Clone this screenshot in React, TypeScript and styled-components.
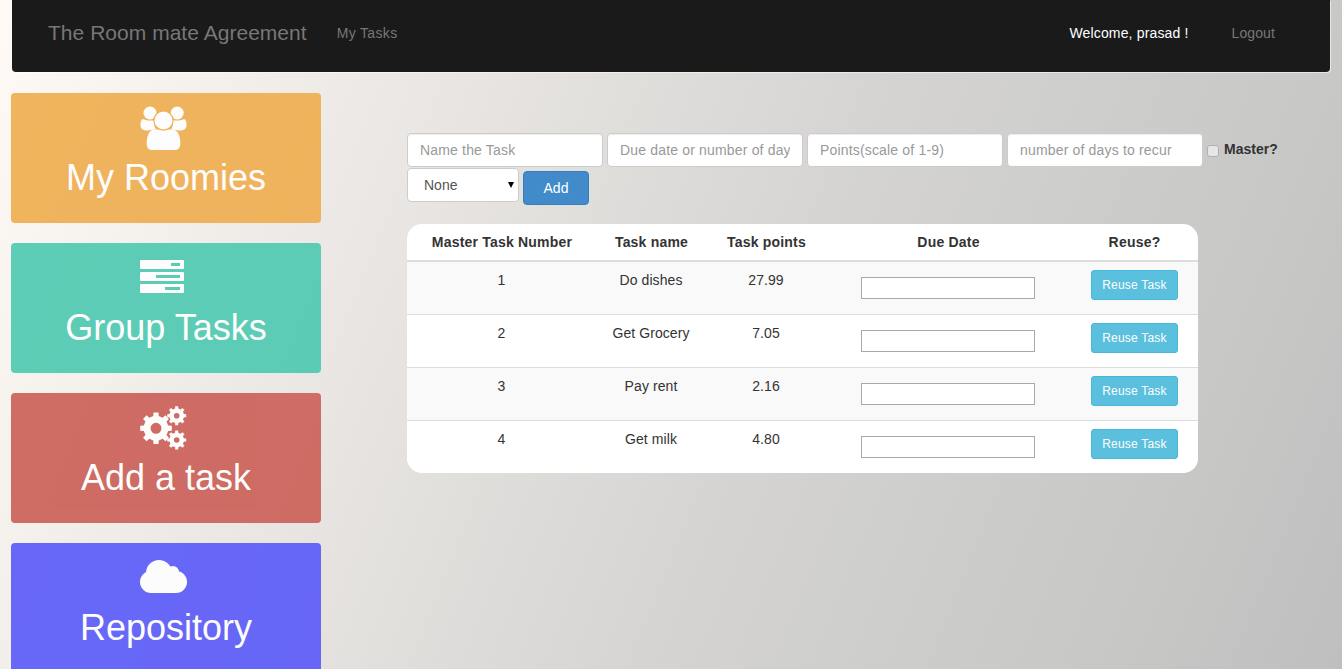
import React from 'react';
import styled, { createGlobalStyle } from 'styled-components';

const GlobalStyle = createGlobalStyle`
  html, body {
    margin: 0;
    height: 669px;
    overflow: hidden;
  }
  body {
    font-family: "Liberation Sans", Arial, sans-serif;
    font-size: 14px;
    line-height: 20px;
    color: #333;
    background: linear-gradient(112deg, #fffaf5 0%, #e8e5e2 31%, #d5d4d2 57%, #cccccb 74%, #c8c8c7 84%, #bfbfbf 100%);
  }
  * {
    box-sizing: border-box;
  }
`;

const Navbar = styled.nav`
  margin: 0 12px;
  height: 72px;
  background: #1a1a1a;
  border-radius: 0 0 4px 4px;
  box-shadow: 1px 1px 0 rgba(255, 255, 255, 0.55);
  display: flex;
  align-items: center;
  padding: 0 55px 6px 36px;
`;

const Brand = styled.a`
  font-size: 21px;
  letter-spacing: 0.03px;
  color: #777;
`;

const NavLink = styled.a`
  font-size: 14px;
  letter-spacing: 0.35px;
  color: #777;
  margin-left: 30px;
`;

const LogoutLink = styled(NavLink)`
  margin-left: 0;
  letter-spacing: 0.1px;
`;

const NavRight = styled.div`
  margin-left: auto;
  display: flex;
  align-items: center;
  gap: 43px;
`;

const Welcome = styled.span`
  letter-spacing: 0.16px;
  color: #fff;
`;

const Layout = styled.div`
  display: flex;
  align-items: flex-start;
  padding: 21px 0 0 11px;
`;

const Sidebar = styled.aside`
  width: 310px;
  flex: none;
  display: flex;
  flex-direction: column;
  gap: 20px;
`;

const Tile = styled.a<{ $bg: string }>`
  height: 130px;
  flex: none;
  border-radius: 4px;
  background: ${({ $bg }) => $bg};
  opacity: 0.9;
  color: #fff;
  display: flex;
  flex-direction: column;
  align-items: center;
  padding-top: 13px;
`;

const TileIcon = styled.svg`
  width: 47px;
  height: 44px;
  margin-right: 5px;
  fill: currentColor;
  display: block;
`;

const TileLabel = styled.span`
  font-size: 36px;
  line-height: 40px;
  margin-top: 8px;
`;

const Main = styled.main`
  margin-left: 86px;
  padding-top: 40px;
  flex: 1;
  min-width: 0;
`;

const TaskForm = styled.form`
  display: flex;
  flex-wrap: wrap;
  align-items: flex-start;
  column-gap: 4px;
  row-gap: 1px;
  margin-bottom: 19px;
`;

const TextField = styled.input`
  width: 196px;
  height: 34px;
  padding: 6px 12px;
  font: 14px/20px "Liberation Sans", Arial, sans-serif;
  letter-spacing: 0.17px;
  color: #555;
  background: #fff;
  border: 1px solid #ccc;
  border-radius: 4px;
  box-shadow: inset 0 1px 1px rgba(0, 0, 0, 0.075);
  &::placeholder {
    color: #999;
    opacity: 1;
  }
`;

const MasterCheck = styled.label`
  display: flex;
  align-items: flex-start;
  font-weight: bold;
  color: #333;
  gap: 5px;
  padding-top: 6px;
  margin-right: 40px;
`;

const CheckBox = styled.span`
  width: 12px;
  height: 12px;
  margin-top: 6px;
  border: 1px solid #b0b0b0;
  border-radius: 3px;
  background: #e6e6e6;
`;

const SelectWrap = styled.div`
  position: relative;
  width: 112px;
  height: 34px;
  &::after {
    content: '';
    position: absolute;
    top: 14px;
    right: 5px;
    border-left: 3.5px solid transparent;
    border-right: 3.5px solid transparent;
    border-top: 6px solid #000;
    pointer-events: none;
  }
`;

const Select = styled.select`
  width: 100%;
  height: 100%;
  appearance: none;
  padding: 0 16px;
  font: 14px/20px "Liberation Sans", Arial, sans-serif;
  color: #555;
  background: #fff;
  border: 1px solid #ccc;
  border-radius: 4px;
`;

const AddButton = styled.button`
  width: 66px;
  height: 34px;
  margin-top: 3px;
  font: 14px/20px "Liberation Sans", Arial, sans-serif;
  color: #fff;
  background: #428bca;
  border: 1px solid #357ebd;
  border-radius: 4px;
`;

const TableCard = styled.div`
  width: 791px;
  background: #fff;
  border-radius: 15px;
  overflow: hidden;
`;

const Table = styled.table`
  width: 100%;
  table-layout: fixed;
  border-collapse: separate;
  border-spacing: 0;
`;

const HeadCell = styled.th<{ $width: number }>`
  width: ${({ $width }) => $width}px;
  height: 38px;
  padding: 8px 8px 8px 9px;
  text-align: center;
  vertical-align: bottom;
  font-weight: bold;
  letter-spacing: 0.2px;
  border-bottom: 2px solid #ddd;
`;

const Row = styled.tr<{ $striped: boolean }>`
  background: ${({ $striped }) => ($striped ? '#f9f9f9' : '#fff')};
`;

const Cell = styled.td`
  height: 52px;
  padding: 8px;
  text-align: center;
  vertical-align: top;
  letter-spacing: 0.08px;
  tr + tr & {
    height: 53px;
    border-top: 1px solid #ddd;
  }
`;

const DateCell = styled(Cell)`
  padding-top: 15px;
`;

const DateInput = styled.input`
  display: block;
  width: 174px;
  height: 22px;
  margin: 0 auto;
  background: #fff;
  border: 1px solid #a9a9a9;
`;

const ReuseButton = styled.button`
  display: block;
  width: 87px;
  height: 30px;
  margin: 0 auto;
  padding: 0 0 0 1px;
  font: 12px/18px "Liberation Sans", Arial, sans-serif;
  letter-spacing: 0.2px;
  color: #fff;
  background: #5bc0de;
  border: 1px solid #46b8da;
  border-radius: 3px;
`;

const gearPath = (cx: number, cy: number, outer: number, inner: number, hole: number, teeth: number) => {
  const points: string[] = [];
  const step = (Math.PI * 2) / teeth;
  for (let i = 0; i < teeth; i++) {
    const a = i * step;
    const corners: [number, number][] = [
      [inner, a - step * 0.28],
      [outer, a - step * 0.2],
      [outer, a + step * 0.2],
      [inner, a + step * 0.28],
    ];
    corners.forEach(([r, t]) => {
      points.push(`${(cx + r * Math.cos(t)).toFixed(2)} ${(cy + r * Math.sin(t)).toFixed(2)}`);
    });
  }
  const ring = `M${cx - hole} ${cy}a${hole} ${hole} 0 1 0 ${hole * 2} 0a${hole} ${hole} 0 1 0 ${-hole * 2} 0Z`;
  return `M${points.join('L')}Z${ring}`;
};

const UsersIcon = () => (
  <TileIcon viewBox="0 0 47 44">
    <circle cx="10" cy="7" r="6.5" />
    <circle cx="37.2" cy="7" r="6.5" />
    <path d="M2 13.5C3.5 12.5 5.5 14.6 10 14.6H14C14 18 14 21 16 23.5L7 24.5C3 24.5.5 23 .5 19.5.5 16.5.8 14.5 2 13.5Z" />
    <path d="M45 13.5C43.5 12.5 41.5 14.6 37 14.6H33C33 18 33 21 31 23.5L40 24.5C44 24.5 46.5 23 46.5 19.5 46.5 16.5 46.2 14.5 45 13.5Z" />
    <path d="M13 23.5H34C38.5 25.5 40.3 31 40.3 37.5 40.3 41.5 38.5 44 35 44H12C8.5 44 6.7 41.5 6.7 37.5 6.7 31 8.5 25.5 13 23.5Z" />
    <circle cx="23.5" cy="14.5" r="9.6" stroke="#f0ad4e" strokeWidth="1.2" />
  </TileIcon>
);

const ServerIcon = () => (
  <TileIcon viewBox="0 0 47 44">
    <path
      fillRule="evenodd"
      d="M1 9h42a1 1 0 0 1 1 1v7a1 1 0 0 1-1 1H1a1 1 0 0 1-1-1v-7a1 1 0 0 1 1-1ZM31 12v3h9v-3ZM1 21h42a1 1 0 0 1 1 1v7a1 1 0 0 1-1 1H1a1 1 0 0 1-1-1v-7a1 1 0 0 1 1-1ZM16 24v3h24v-3ZM1 33h42a1 1 0 0 1 1 1v7a1 1 0 0 1-1 1H1a1 1 0 0 1-1-1v-7a1 1 0 0 1 1-1ZM25 36v3h15v-3Z"
      transform="translate(0 -5)"
    />
  </TileIcon>
);

const GearsIcon = () => (
  <TileIcon viewBox="0 0 47 44">
    <path fillRule="evenodd" d={gearPath(16, 22.3, 16, 12.5, 5.5, 8)} />
    <path fillRule="evenodd" d={gearPath(36.7, 9.7, 9.6, 7.4, 2.8, 8)} />
    <path fillRule="evenodd" d={gearPath(36.7, 34, 9.6, 7.4, 2.8, 8)} />
  </TileIcon>
);

const CloudIcon = () => (
  <TileIcon viewBox="0 0 47 44">
    <g transform="translate(0 4)">
      <circle cx="19" cy="13" r="13" />
      <circle cx="33" cy="12" r="6" />
      <circle cx="11" cy="22" r="11" />
      <circle cx="36" cy="22" r="11" />
      <rect x="11" y="14" width="25" height="19" />
    </g>
  </TileIcon>
);

const tiles = [
  { label: 'My Roomies', bg: '#f0ad4e', Icon: UsersIcon },
  { label: 'Group Tasks', bg: '#4dc9b1', Icon: ServerIcon },
  { label: 'Add a task', bg: '#cb5e56', Icon: GearsIcon },
  { label: 'Repository', bg: '#5959fa', Icon: CloudIcon },
];

const columns = [
  { title: 'Master Task Number', width: 189 },
  { title: 'Task name', width: 110 },
  { title: 'Task points', width: 120 },
  { title: 'Due Date', width: 244 },
  { title: 'Reuse?', width: 128 },
];

const tasks = [
  { id: 1, name: 'Do dishes', points: '27.99' },
  { id: 2, name: 'Get Grocery', points: '7.05' },
  { id: 3, name: 'Pay rent', points: '2.16' },
  { id: 4, name: 'Get milk', points: '4.80' },
];

export default function App() {
  return (
    <>
      <GlobalStyle />
      <Navbar>
        <Brand>The Room mate Agreement</Brand>
        <NavLink>My Tasks</NavLink>
        <NavRight>
          <Welcome>Welcome, prasad !</Welcome>
          <LogoutLink>Logout</LogoutLink>
        </NavRight>
      </Navbar>
      <Layout>
        <Sidebar>
          {tiles.map(({ label, bg, Icon }) => (
            <Tile key={label} $bg={bg}>
              <Icon />
              <TileLabel>{label}</TileLabel>
            </Tile>
          ))}
        </Sidebar>
        <Main>
          <TaskForm>
            <TextField placeholder="Name the Task" />
            <TextField placeholder="Due date or number of days" />
            <TextField placeholder="Points(scale of 1-9)" />
            <TextField placeholder="number of days to recur" />
            <MasterCheck>
              <CheckBox />
              Master?
            </MasterCheck>
            <SelectWrap>
              <Select defaultValue="None">
                <option>None</option>
              </Select>
            </SelectWrap>
            <AddButton type="button">Add</AddButton>
          </TaskForm>
          <TableCard>
            <Table>
              <thead>
                <tr>
                  {columns.map(({ title, width }) => (
                    <HeadCell key={title} $width={width}>{title}</HeadCell>
                  ))}
                </tr>
              </thead>
              <tbody>
                {tasks.map(({ id, name, points }) => (
                  <Row key={id} $striped={id % 2 === 1}>
                    <Cell>{id}</Cell>
                    <Cell>{name}</Cell>
                    <Cell>{points}</Cell>
                    <DateCell><DateInput /></DateCell>
                    <Cell><ReuseButton type="button">Reuse Task</ReuseButton></Cell>
                  </Row>
                ))}
              </tbody>
            </Table>
          </TableCard>
        </Main>
      </Layout>
    </>
  );
}
